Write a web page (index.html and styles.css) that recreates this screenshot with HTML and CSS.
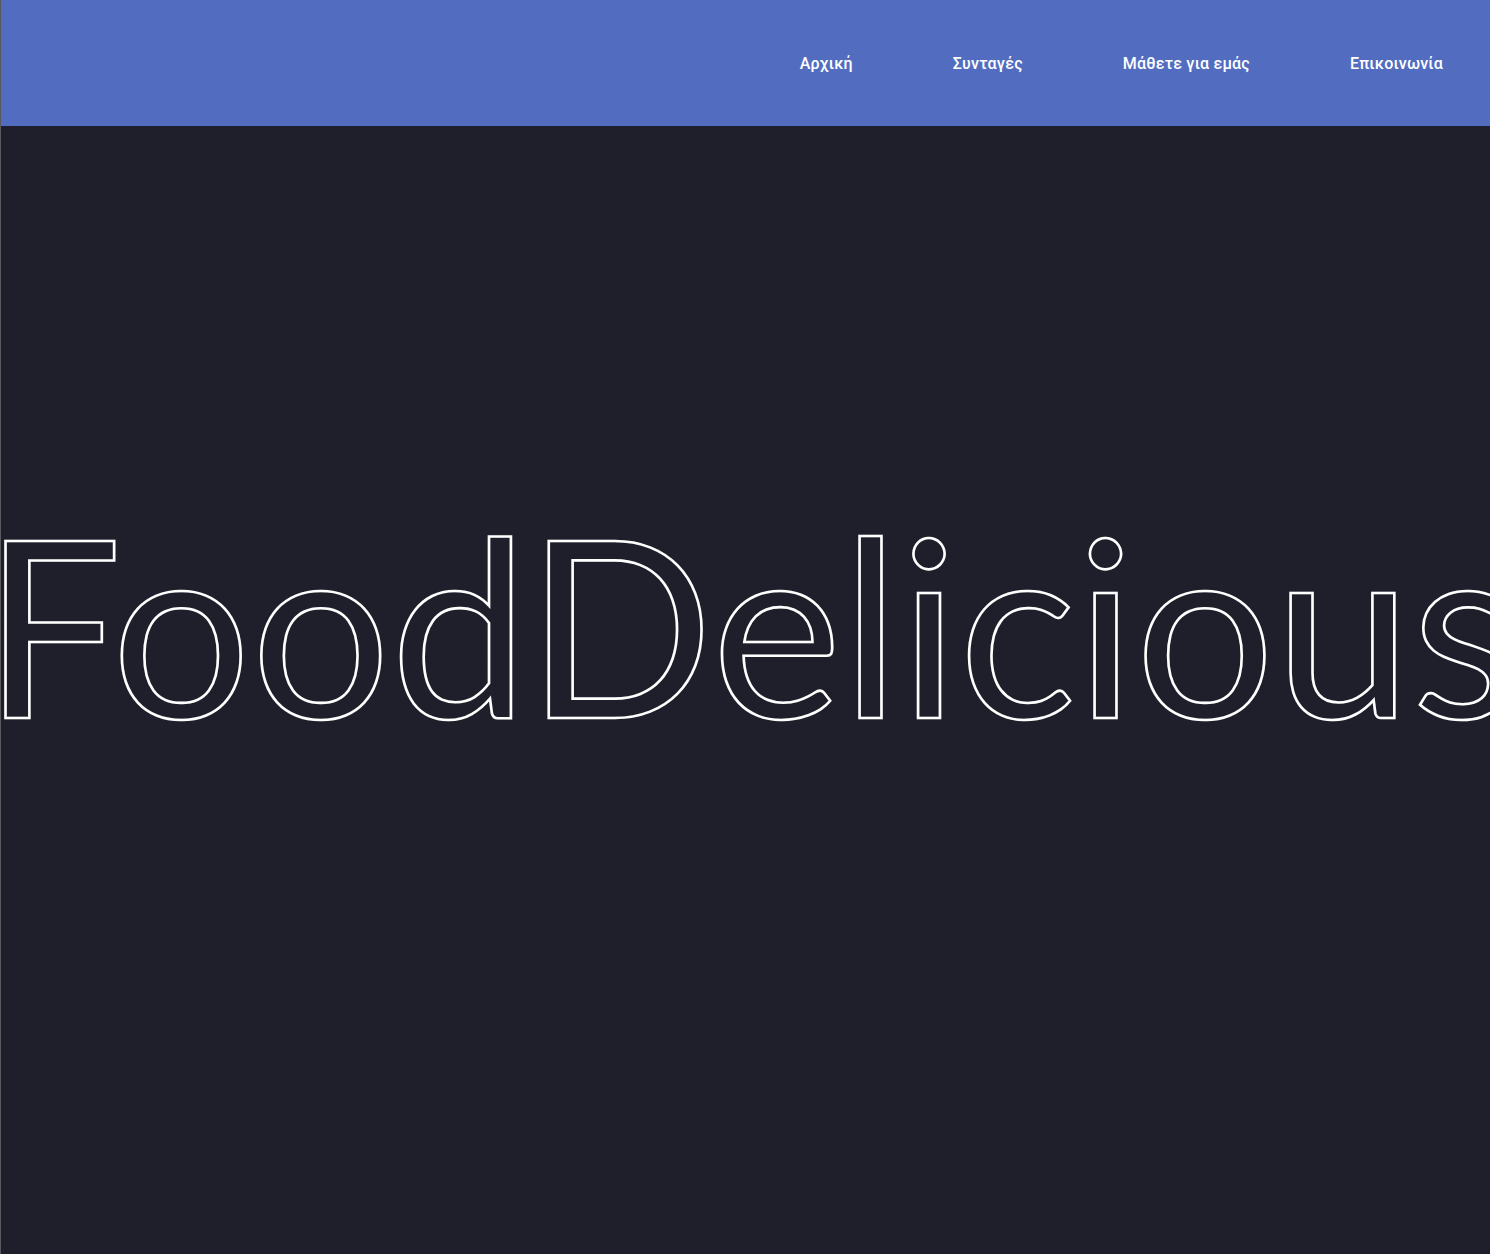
FILE: index.html
```html
<!DOCTYPE html>
<html lang="el">
<head>
<meta charset="utf-8">
<title>FoodDelicious</title>
<link rel="stylesheet" href="styles.css">
</head>
<body>
<header class="topbar">
  <nav class="nav">
    <a class="nav-link" href="#">Αρχική</a>
    <a class="nav-link" href="#">Συνταγές</a>
    <a class="nav-link" href="#">Μάθετε για εμάς</a>
    <a class="nav-link" href="#">Επικοινωνία</a>
  </nav>
</header>
<main class="hero">
  <h1 class="hero-title">FoodDelicious</h1>
</main>
</body>
</html>
```
FILE: styles.css
```css
html, body {
  margin: 0;
  padding: 0;
}
body {
  background: #1e1f2b;
  border-left: 1px solid #5a5a5e;
  min-height: 100vh;
  box-sizing: border-box;
  overflow: hidden;
  font-family: Roboto, "Liberation Sans", sans-serif;
}
.topbar {
  height: 126px;
  background: #526dbf;
  display: flex;
  align-items: center;
  justify-content: flex-end;
  padding-right: 47px;
  box-sizing: border-box;
}
.nav {
  display: flex;
  gap: 100px;
}
.nav-link {
  color: #ffffff;
  text-decoration: none;
  font-size: 16px;
  font-weight: 500;
  letter-spacing: 0.2px;
}
.hero {
  height: calc(100vh - 126px);
  padding-bottom: 136px;
  box-sizing: border-box;
  display: flex;
  align-items: center;
}
.hero-title {
  margin: 0 0 0 -18px;
  font-family: Lato, sans-serif;
  font-weight: 400;
  font-size: 246px;
  white-space: nowrap;
  color: transparent;
  -webkit-text-stroke: 2.6px #ffffff;
}
```
